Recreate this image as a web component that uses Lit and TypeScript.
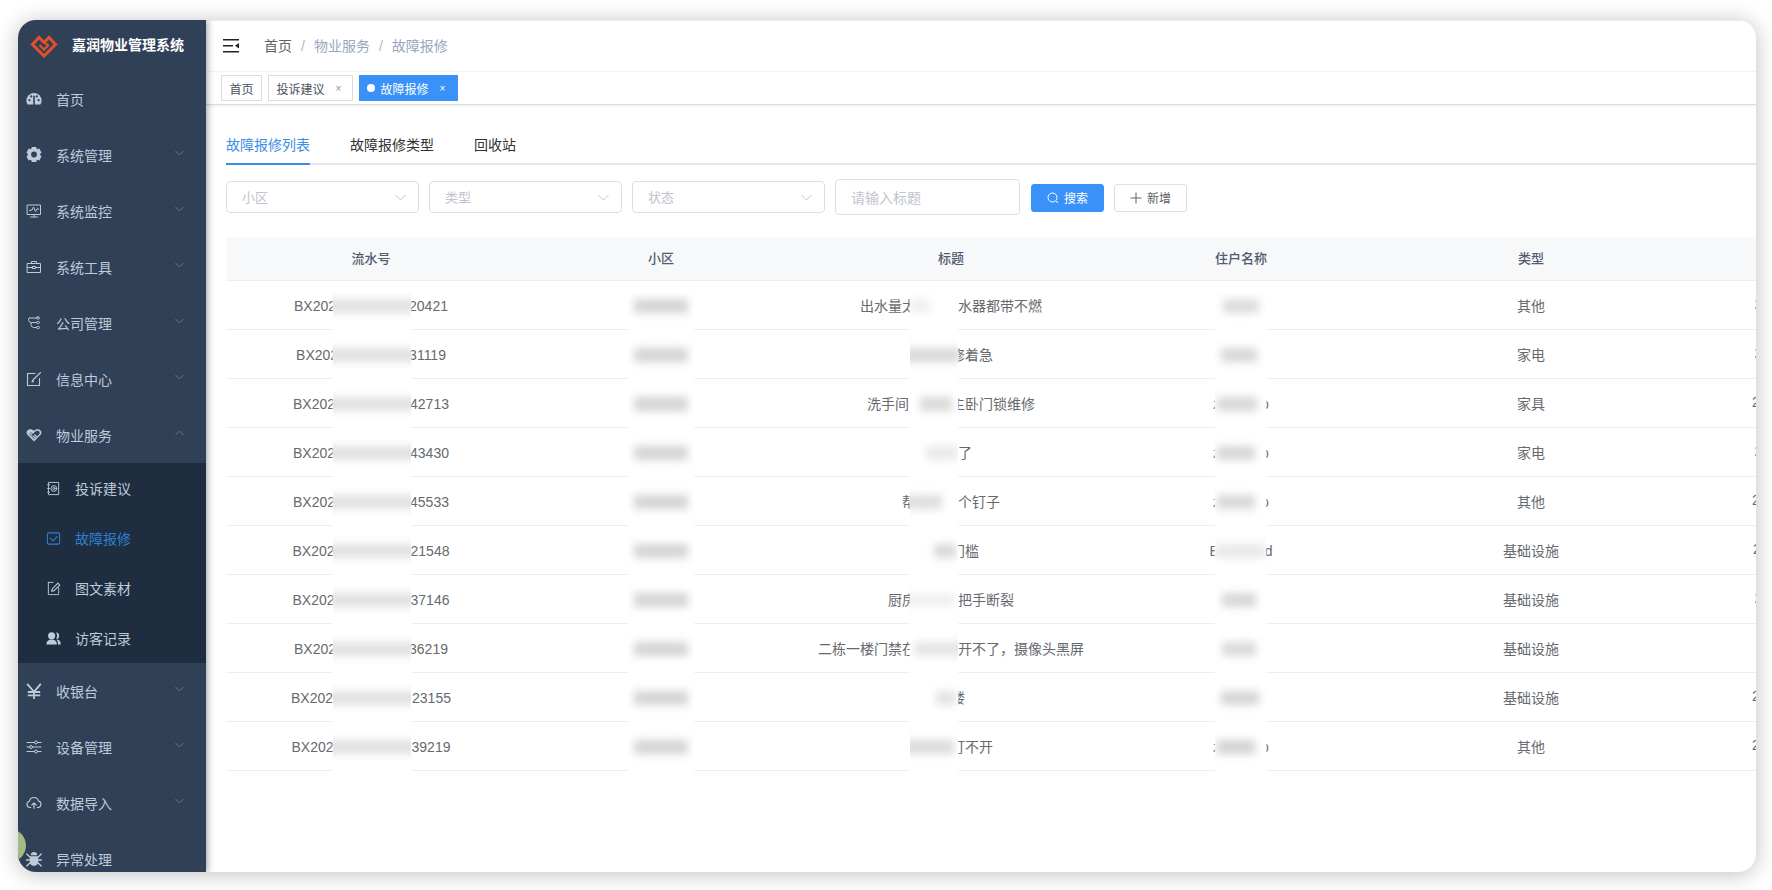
import { LitElement, html, css, svg, nothing } from "lit";
import { customElement } from "lit/decorators.js";

const s = (inner: any, extra = "") => html`<svg class="ico ${extra}" viewBox="0 0 16 16" fill="none" stroke="currentColor" stroke-width="1" stroke-linecap="round" stroke-linejoin="round">${inner}</svg>`;

const icons: Record<string, any> = {
  dash: s(svg`<path fill="currentColor" stroke="none" d="M8 2A7.6 7.6 0 0 0 .4 9.6c0 1.5.4 2.9 1.2 4h12.8c.8-1.1 1.2-2.5 1.2-4A7.6 7.6 0 0 0 8 2z"/><g fill="#304057" stroke="none"><circle cx="3.4" cy="9.2" r="1.1"/><circle cx="5.2" cy="5.4" r="1.1"/><circle cx="10.8" cy="5.4" r="1.1"/><circle cx="12.6" cy="9.2" r="1.1"/></g><path stroke="#304057" stroke-width="1.6" d="M8 13.5V5.2"/>`),
  gear: s(svg`<path fill="currentColor" stroke="none" fill-rule="evenodd" d="M5.8 0h4.4l.7 2.2 2.4-.6 2.2 3.8L13.8 7.5l1.7 2.1-2.2 3.8-2.4-.6-.7 2.2H5.8l-.7-2.2-2.4.6L.5 9.6l1.7-2.1L.5 5.4l2.2-3.8 2.4.6zM8 4.6a2.9 2.9 0 1 0 0 5.8 2.9 2.9 0 0 0 0-5.8z"/>`),
  monitor: s(svg`<path d="M1.5 2h13v9.5h-13zM8 11.5V14M4.5 14h7M3.5 7.5 6 7l1.5-3 2 4.5 1.5-2.5h1.5"/>`),
  case: s(svg`<path d="M1.5 4.5h13v9h-13zM5.5 4.5V2.5h5v2M1.5 8.5h5M9.5 8.5h5M6.5 7.5h3v2h-3z"/>`),
  tree: s(svg`<path d="M3.5 3h7M3.5 3c-.8 0-1 .6-1 1.2 0 1.6 1 3.3 2.6 3.3h5M5 8c-.3 1.800.5 4.500 2.500 4.500h3"/><rect x="10.500" y="2" width="3" height="2" rx="1"/><rect x="10.500" y="6.500" width="3" height="2" rx="1"/><rect x="10.500" y="11.500" width="3" height="2" rx="1"/>`),
  edit: s(svg`<path stroke-width="1.1" d="M9 2.500H1.500v12h12V7.500M6.500 9.500 14.500 1.500"/><path stroke-width="1.1" d="M6.500 9.500 6 11l1.600-.5"/>`),
  hand: s(svg`<path fill="currentColor" stroke="none" fill-rule="evenodd" d="M8 14.500 1.200 7.400C-.2 5.700.7 2.500 3.800 2.200c1.600-.2 3 .4 4.200 1.600 1.200-1.200 2.600-1.800 4.200-1.600 3.100.3 4 3.500 2.600 5.200zM8 12.600l5.400-5.600c.8-1 .3-3-1.500-3.200-1.200-.1-2.200.3-3.100 1.200l-3 3 .9.9 2.300-1.600 2 2z"/><path stroke="#304057" stroke-width=".9" d="M3.500 6.800l4.800 4.800M5 5.600l4.600 4.600"/>`),
  doc: s(svg`<path d="M3 1.500h10.500v13H3zM1.800 4h2M1.800 8h2M1.800 12h2"/><circle cx="8.400" cy="8" r="3.100"/><circle cx="8.400" cy="8" r="1.200"/>`),
  check: s(svg`<rect x="1.500" y="2" width="13" height="12" rx="1.500" stroke-width="1.100"/><path stroke-width="1.100" d="M4.500 7.500 7.500 10.500l4.500-4.500"/>`),
  pen: s(svg`<path stroke-dasharray="2.400 .8" d="M2.500 1.500h5M2.500 1.500v13h11V7"/><path stroke-width="1.200" d="M6 11l.7-2.700 6-6 2 2-6 6z"/>`),
  users: s(svg`<g fill="currentColor" stroke="none"><circle cx="6" cy="5" r="3.800"/><path d="M.4 14.500c0-3.800 2.400-5.500 5.600-5.500s5.600 1.700 5.600 5.500z"/><path d="M10.500 1.500a3.500 3.500 0 0 1 0 7c.9-.9 1.300-2.200 1.300-3.500s-.4-2.600-1.300-3.500zM12.200 9c2.400.5 3.600 2.400 3.600 5.500h-3c0-2.200-.2-4-1.500-5z"/></g>`),
  yen: s(svg`<path stroke-width="1.800" stroke-linecap="butt" stroke-linejoin="miter" d="M1.200 .8 8 8.800l6.800-8M8 8.800V16M1.800 9h12.400M1.800 12.300h12.400"/>`),
  sliders: s(svg`<path d="M1 3.500h7.500M11.500 3.500H15M1 8h2.500M6.500 8H15M1 12.500h7.500M11.500 12.500H15"/><circle cx="10" cy="3.500" r="1.500"/><circle cx="5" cy="8" r="1.500"/><circle cx="10" cy="12.500" r="1.500"/>`),
  cloud: s(svg`<path stroke-width="1.100" d="M4.800 12.500H4A3.200 3.200 0 0 1 3.400 6.200 4.600 4.600 0 0 1 12.400 6 3.300 3.300 0 0 1 12 12.500h-.8M8 13.500V8M5.800 10 8 7.800l2.200 2.200"/>`),
  bug: s(svg`<g fill="currentColor" stroke="none"><path d="M4.800 4.200a3.200 3.200 0 0 1 6.400 0zM3.800 5.200h8.400v5.800c0 2.300-1.900 3.900-4.200 3.900s-4.200-1.600-4.200-3.900z"/></g><path stroke-width="1.300" d="M.8 3 3.800 6M15.200 3l-3 3M.4 9h3.400M15.600 9h-3.400M.8 15l3-3M15.200 15l-3-3"/>`),
};

const topMenu = [
  ["dash", "首页", ""], ["gear", "系统管理", "d"], ["monitor", "系统监控", "d"], ["case", "系统工具", "d"],
  ["tree", "公司管理", "d"], ["edit", "信息中心", "d"], ["hand", "物业服务", "u"],
];
const subMenu = [["doc", "投诉建议", false], ["check", "故障报修", true], ["pen", "图文素材", false], ["users", "访客记录", false]];
const botMenu = [["yen", "收银台", "d"], ["sliders", "设备管理", "d"], ["cloud", "数据导入", "d"], ["bug", "异常处理", ""]];

// head / tail of each serial and the masked width between them
const rows = [
  { a: "20421", g: 73, t: ["出水量太", 3, "水器都带不燃"], n: null, ty: "其他", d: 133 },
  { a: "31119", g: 71, t: ["", 3, "修着急"], n: null, ty: "家电", d: 133 },
  { a: "42713", g: 75, t: ["洗手间", 3, "主卧门锁维修"], n: ["z", 41, "p"], ty: "家具", d: 138 },
  { a: "43430", g: 75, t: ["", 2, "了"], n: ["z", 41, "p"], ty: "家电", d: 133 },
  { a: "45533", g: 75, t: ["帮", 3, "个钉子"], n: ["z", 41, "p"], ty: "其他", d: 138 },
  { a: "21548", g: 76, t: ["", 2, "门槛"], n: ["B", 46, "d"], ty: "基础设施", d: 136 },
  { a: "37146", g: 76, t: ["厨房", 3, "把手断裂"], n: null, ty: "基础设施", d: 133 },
  { a: "36219", g: 73, t: ["二栋一楼门禁在", 3, "开不了，摄像头黑屏"], n: null, ty: "基础设施", d: 100 },
  { a: "23155", g: 79, t: ["", 1, "楼"], n: null, ty: "基础设施", d: 138 },
  { a: "39219", g: 78, t: ["", 3, "打不开"], n: ["z", 41, "p"], ty: "其他", d: 138 },
];

type Bar = [number, number, number];
const cols: { left: number; width: number; color: string; bars: Bar[] }[] = [
  { left: 107, width: 78, color: "#dcdcdc", bars: Array.from({ length: 10 }, (): Bar => [-8, 94, 0.85]) },
  { left: 402, width: 66, color: "#c9c9c9", bars: Array.from({ length: 10 }, (): Bar => [6, 54, 0.8]) },
  { left: 684, width: 48, color: "#cfcfcf", bars: [[0, 20, 0.3], [-6, 56, 0.8], [10, 32, 0.8], [16, 32, 0.45], [-6, 38, 0.7], [24, 22, 0.8], [-6, 50, 0.3], [4, 50, 0.55], [26, 20, 0.6], [-6, 50, 0.75]] },
  { left: 989, width: 51, color: "#cdcdcd", bars: [[8, 36, 0.7], [6, 36, 0.8], [2, 40, 0.8], [2, 38, 0.8], [2, 38, 0.8], [0, 51, 0.45], [7, 34, 0.8], [7, 34, 0.75], [6, 38, 0.85], [2, 38, 0.9]] },
];

@customElement("app-root")
class AppRoot extends LitElement {
  static styles = css`
    :host { display: block; width: 1772px; height: 890px; background: #fff; font-family: "Liberation Sans", "Noto Sans CJK SC", sans-serif; font-size: 14px; color: #66696e; overflow: hidden; }
    * { box-sizing: border-box; }
    .stage { padding: 20px 16px 18px 18px; height: 100%; }
    .window { position: relative; display: flex; height: 100%; border-radius: 18px; overflow: hidden; background: #fff; box-shadow: 0 2px 22px rgba(0,0,0,.26); }
    .ico { width: 16px; height: 16px; display: block; }
    .side { width: 188px; flex: none; background: #304057; color: #bfcbd9; box-shadow: 2px 0 6px rgba(0,21,41,.35); z-index: 2; overflow: hidden; }
    .brand { height: 51px; display: flex; align-items: center; padding: 0 0 1px 12px; color: #fff; font-weight: 700; font-size: 14px; }
    .brand svg { width: 28px; height: 26px; margin-right: 14px; flex: none; }
    .brand span { margin-top: -2px; }
    .item { height: 56px; display: flex; align-items: center; padding-left: 8px; }
    .item .ico { margin-right: 15px; flex: none; }
    .item span { margin-left: -1px; }
    .chev { margin-left: auto; margin-right: 22px; margin-top: -4px; width: 9px; height: 6px; color: #66768c; flex: none; }
    .sub { background: #1f2d41; }
    .subitem { height: 50px; display: flex; align-items: center; padding-left: 28px; }
    .subitem .ico { width: 15px; height: 15px; margin-right: 15px; flex: none; }
    .subitem span { margin-left: -1px; }
    .subitem.on { color: #2d80d2; }
    .dot { position: absolute; left: -25px; top: 809px; width: 33px; height: 33px; border-radius: 50%; background: #a3bb84; z-index: 3; }

    .main { flex: 1; min-width: 0; display: flex; flex-direction: column; overflow: hidden; border-top: 1px solid #ececec; }
    .top { height: 51px; flex: none; display: flex; align-items: center; border-bottom: 1px solid #f5f5f5; padding: 0 0 1px 17px; }
    .burger { width: 16px; height: 14px; color: #222; margin-right: 25px; flex: none; }
    .crumb { color: #97a8be; display: flex; align-items: baseline; margin-top: -1px; }
    .crumb b { font-weight: 400; color: #606266; }
    .crumb i { font-style: normal; color: #b4b8bf; margin: 0 9px; }
    .tags { height: 33px; flex: none; display: flex; align-items: flex-start; gap: 6px; padding: 3px 0 0 15px; border-bottom: 1px solid #d8dce5; box-shadow: 0 1px 3px rgba(0,0,0,.08); font-size: 12px; }
    .tag { height: 26px; display: flex; align-items: center; padding: 0 7.5px; border: 1px solid #d8dce5; background: #fff; color: #495060; }
    .tag .x { font-size: 10px; margin: 0 3px 0 11px; color: #8a8f99; }
    .tag.on { background: #3a92f8; border-color: #3a92f8; color: #fff; padding-right: 8.5px; }
    .tag.on .x { color: #fff; }
    .tag.on::before { content: ""; width: 8px; height: 8px; border-radius: 50%; background: #fff; margin-right: 5px; }
    .body { padding: 22px 0 0 20px; }
    .tabs { display: flex; gap: 40px; height: 38px; border-bottom: 2px solid #e4e7ed; }
    .tab { height: 38px; line-height: 36px; color: #303133; border-bottom: 2px solid transparent; }
    .tab.on { color: #3a8ee6; border-bottom-color: #3a8ee6; }
    .filters { display: flex; align-items: center; gap: 10px; margin-top: 14px; height: 36px; }
    .sel { width: 193px; height: 32px; border: 1px solid #dcdfe6; border-radius: 4px; padding: 0 12px 1px 15px; display: flex; align-items: center; justify-content: space-between; color: #c0c4cc; font-size: 13px; }
    .sel svg { width: 11px; height: 7px; margin-top: 2px; }
    .inp { width: 185px; height: 36px; border: 1px solid #dcdfe6; border-radius: 4px; padding: 0 0 1px 15px; display: flex; align-items: center; color: #c0c4cc; }
    .btn { width: 73px; height: 28px; margin-top: 2px; padding-bottom: 1px; border-radius: 3px; border: 1px solid #dcdfe6; display: flex; align-items: center; justify-content: center; gap: 5px; font-size: 12px; color: #606266; }
    .btn svg { width: 12px; height: 12px; }
    .btn.pri { background: #3a92f8; border-color: #3a92f8; color: #fff; margin-left: 1px; }
    .table { position: relative; width: 1740px; margin-top: 22px; }
    .row { display: grid; grid-template-columns: repeat(6, 290px); align-items: center; height: 49px; border-bottom: 1px solid #ebeef5; text-align: center; white-space: nowrap; }
    .row.head { height: 44px; padding-bottom: 2px; background: #f7f8f9; color: #515a6e; font-weight: 500; font-size: 13px; }
    .gap { display: inline-block; height: 1em; }
    .lead { display: inline-block; text-align: left; overflow: hidden; }
    .patch { position: absolute; top: 56px; bottom: -1px; background: #fff; overflow: hidden; box-shadow: 0 0 2px #fff; }
    .patch-in { margin-top: -12px; }
    .slot { height: 49px; display: flex; align-items: center; }
    .bar { height: 14px; filter: blur(4px); flex: none; }
  `;

  render() {
    const item = ([icon, label, dir]: any) => html`<div class="item">${icons[icon]}<span>${label}</span>${dir ? html`<svg class="chev" viewBox="0 0 9 6" fill="none" stroke="currentColor"><path d=${dir === "d" ? "M.5 1 4.5 5l4-4" : "M.5 5l4-4 4 4"}/></svg>` : nothing}</div>`;
    const chevron = html`<svg viewBox="0 0 11 7" fill="none" stroke="#c0c4cc"><path d="M.5 1 5.5 6l5-5"/></svg>`;
    return html`<div class="stage"><div class="window">
      <aside class="side">
        <div class="brand">
          <svg viewBox="0 0 28 26" fill="none" stroke="#e0512b" stroke-width="3"><path d="M14 24 2.500 12.500 9 5.500l5 5 5-5 6.500 7z"/><path stroke-width="2.400" d="M9.500 13l4.500 4.500 4-4-2.500-2.500"/></svg>
          <span>嘉润物业管理系统</span>
        </div>
        ${topMenu.map(item)}
        <div class="sub">${subMenu.map(([i, l, on]: any) => html`<div class="subitem ${on ? "on" : ""}">${icons[i]}<span>${l}</span></div>`)}</div>
        ${botMenu.map(item)}
      </aside>
      <div class="dot"></div>
      <main class="main">
        <div class="top">
          <svg class="burger" viewBox="0 0 16 14" fill="currentColor"><path d="M0 0h16v1.600H0zM0 6h10v1.600H0zM0 12h16v1.600H0zM16 4v5.600L12 6.800z"/></svg>
          <div class="crumb"><b>首页</b><i>/</i><span>物业服务</span><i>/</i><span>故障报修</span></div>
        </div>
        <div class="tags">
          <div class="tag">首页</div>
          <div class="tag">投诉建议<span class="x">×</span></div>
          <div class="tag on">故障报修<span class="x">×</span></div>
        </div>
        <div class="body">
          <div class="tabs"><div class="tab on">故障报修列表</div><div class="tab">故障报修类型</div><div class="tab">回收站</div></div>
          <div class="filters">
            <div class="sel"><span>小区</span>${chevron}</div>
            <div class="sel"><span>类型</span>${chevron}</div>
            <div class="sel"><span>状态</span>${chevron}</div>
            <div class="inp">请输入标题</div>
            <div class="btn pri"><svg viewBox="0 0 12 12" fill="none" stroke="currentColor"><circle cx="5.500" cy="5.500" r="4.500"/><path d="M9 9l2 2"/></svg>搜索</div>
            <div class="btn"><svg viewBox="0 0 12 12" fill="none" stroke="currentColor"><path d="M6 .5v11M.5 6h11"/></svg>新增</div>
          </div>
          <div class="table">
            <div class="row head"><div>流水号</div><div>小区</div><div>标题</div><div>住户名称</div><div>类型</div><div></div></div>
            ${rows.map(r => html`<div class="row">
              <div>BX202<span class="gap" style="width:${r.g}px"></span>${r.a}</div>
              <div></div>
              <div>${r.t[0]}<span class="gap" style="width:${r.t[1]}em"></span>${r.t[2]}</div>
              <div>${r.n ? html`${r.n[0]}<span class="gap" style="width:${r.n[1]}px"></span>${r.n[2]}` : nothing}</div>
              <div>${r.ty}</div>
              <div><span class="lead" style="width:${r.d}px">2</span></div>
            </div>`)}
            ${cols.map(c => html`<div class="patch" style="left:${c.left}px;width:${c.width}px"><div class="patch-in">
              ${c.bars.map(b => html`<div class="slot"><div class="bar" style="margin-left:${b[0]}px;width:${b[1]}px;background:${c.color};opacity:${b[2]}"></div></div>`)}
            </div></div>`)}
          </div>
        </div>
      </main>
    </div></div>`;
  }
}
